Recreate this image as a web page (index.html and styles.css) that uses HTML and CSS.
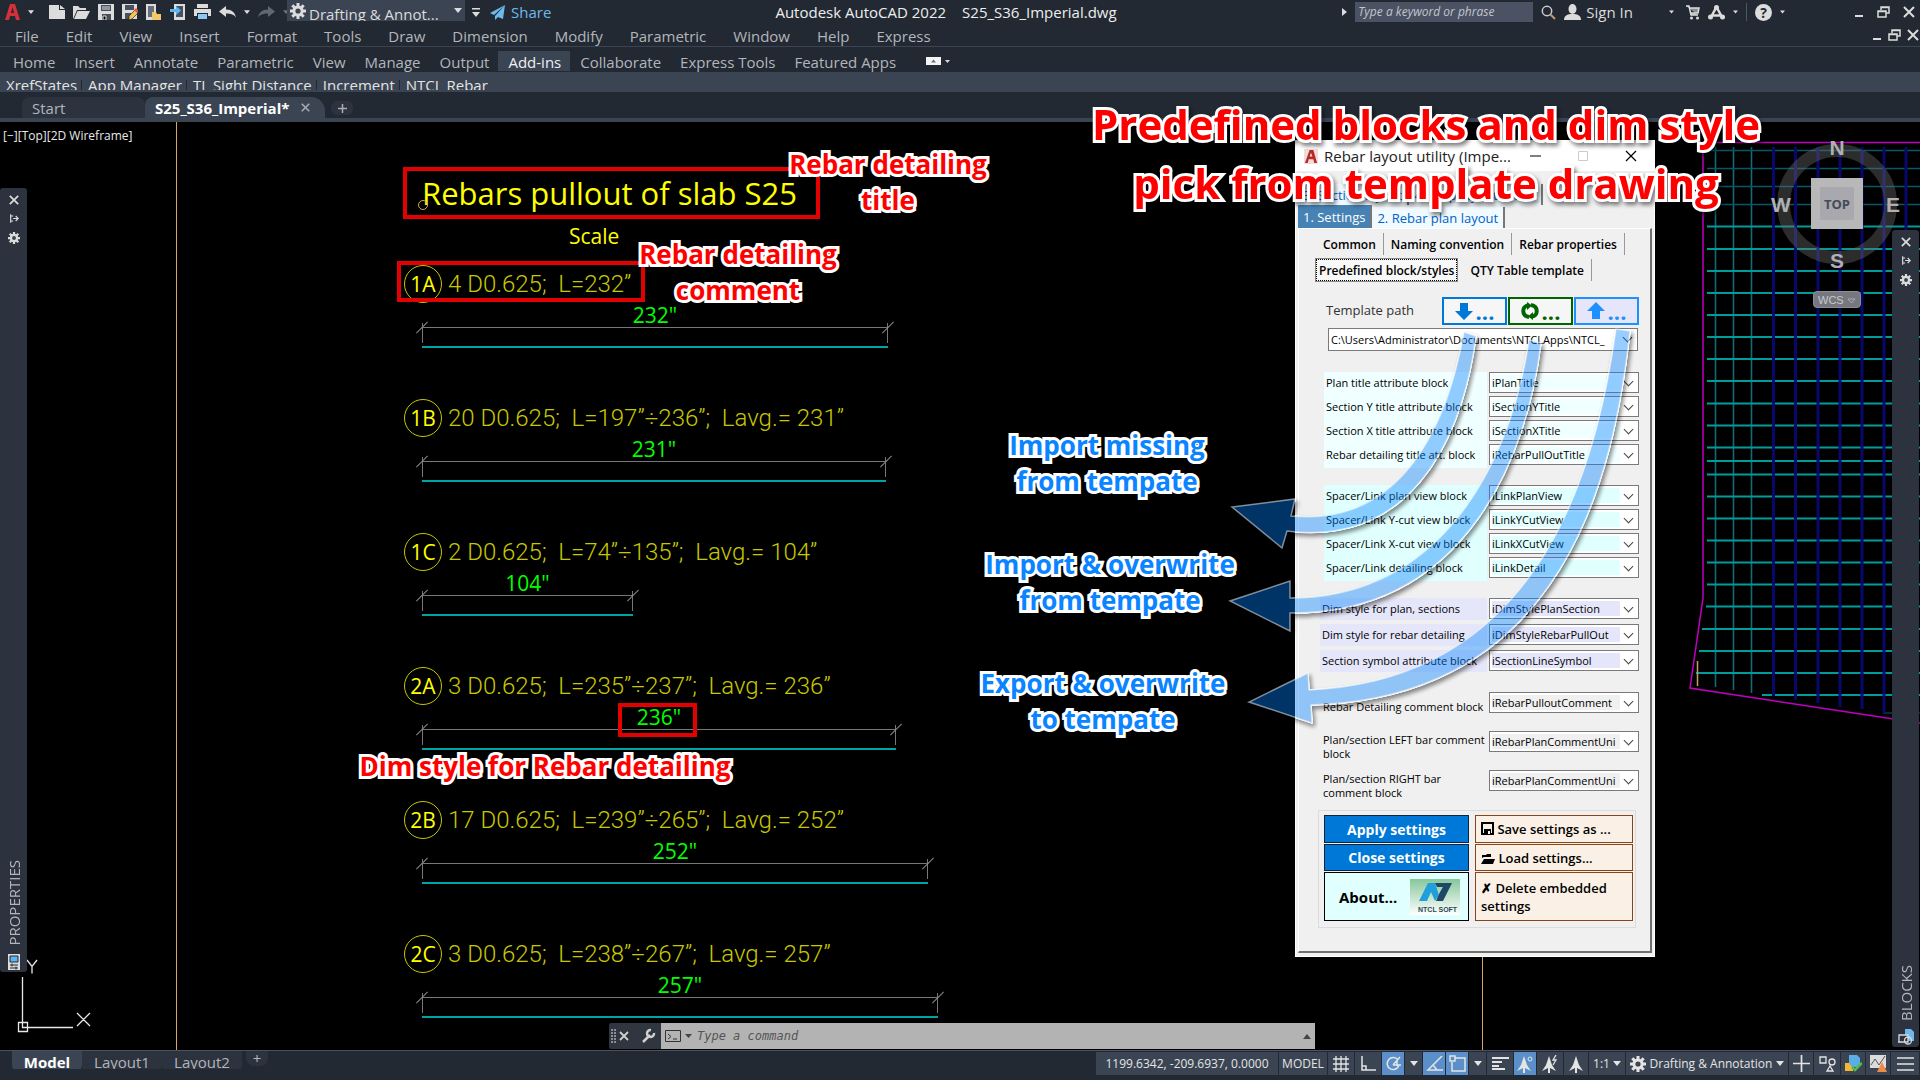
FILE: index.html
```html
<!DOCTYPE html>
<html lang="en">

<head>
    <meta charset="UTF-8" />
    <meta name="viewport" content="width=device-width, initial-scale=1.0" />
    <title>Autodesk AutoCAD 2022 - S25_S36_Imperial.dwg</title>
    <link rel="stylesheet" href="styles.css">
</head>

<body>
    <!-- shared icons -->
    <svg class="sprite" aria-hidden="true">
        <symbol id="i-down" viewBox="0 0 8 5"><path d="M0 0h8L4 5z" fill="currentColor" /></symbol>
        <symbol id="i-gear" viewBox="0 0 16 16">
            <g stroke="currentColor" stroke-width="3">
                <path d="M8 0v16M0 8h16M2.3 2.3l11.4 11.4M13.7 2.3L2.3 13.7" />
            </g>
            <circle cx="8" cy="8" r="5.6" fill="currentColor" />
            <circle class="hole" cx="8" cy="8" r="2.6" />
        </symbol>
        <symbol id="i-close" viewBox="0 0 12 12"><path d="M1 1l10 10M11 1L1 11" stroke="currentColor" stroke-width="2" /></symbol>
        <symbol id="i-restore" viewBox="0 0 13 12">
            <path d="M4 4V1h8v6H9M4 1.6h8M1 5h8v6H1zM1 5.6h8" fill="none" stroke="currentColor" stroke-width="1.5" />
        </symbol>
        <symbol id="i-min" viewBox="0 0 10 12"><path d="M1 10h8" stroke="currentColor" stroke-width="2" /></symbol>
        <symbol id="i-pin" viewBox="0 0 12 12">
            <path d="M2 1v10M2 3h3M2 9h3M5 6h6M8 3l3 3-3 3" fill="none" stroke="currentColor" stroke-width="1.4" />
        </symbol>
        <symbol id="i-person-a" viewBox="0 0 16 18"><path d="M8 1l3 9 4 6-6-3v5H7v-5l-6 3 4-6z" fill="currentColor" /></symbol>
    </svg>

    <header class="app-header">
        <div class="title-bar">
            <div class="quick">
                <svg class="logo" width="15" height="16" viewBox="0 0 15 16"><path d="M0 16L5 0h5l5 16h-4l-1-4H5l-1 4zM6 9h3L7.500 3z" fill="#d3303b" fill-rule="evenodd" /></svg>
                <svg class="arrow" width="6" height="4"><use href="#i-down" /></svg>
                <svg class="file-first" width="16" height="14" viewBox="0 0 16 14"><path d="M0 0h10v5h6v9H0zM11 0l5 4h-5z" fill="#dcdcdc" /></svg>
                <svg width="17" height="14" viewBox="0 0 17 14"><path d="M0 14V1h5l2 2h6v2H4L1 12M4.500 6H17l-4 8H1z" fill="#dcdcdc" /></svg>
                <svg width="16" height="16" viewBox="0 0 16 16"><path d="M0 0h16v16H0z" fill="#dcdcdc" /><path d="M3 1h10v6H3zM4 10h9v6H4z" fill="#47505c" /><path d="M4 3h8M4 5h8M5 12h3v4H5z" stroke="#dcdcdc" /></svg>
                <svg width="16" height="16" viewBox="0 0 16 16"><path d="M0 0h15v15H0z" fill="#dcdcdc" /><path d="M3 1h9v5H3zM3 9h6v6H3z" fill="#47505c" /><path d="M7 16v-4l6-6 3 3-6 6z" fill="#f2c14e" stroke="#222932" stroke-width=".7" /><path d="M12 6l2-2 3 3-2 2z" fill="#e4584c" /></svg>
                <svg width="16" height="16" viewBox="0 0 16 16"><path d="M0 0h10v16H0z" fill="#dcdcdc" /><path d="M2 2h6v11H2z" fill="#66707c" /><path d="M6 8h4l1 2h4v6H6z" fill="#f2c868" /></svg>
                <svg width="16" height="16" viewBox="0 0 16 16"><path d="M4 0h11v16H4z" fill="#dcdcdc" /><path d="M6 2h7v11H6z" fill="#47505c" /><path d="M0 5h6V2l5 4.500L6 11V8H0z" fill="#59b6f5" /></svg>
                <svg width="17" height="16" viewBox="0 0 17 16"><path d="M3 0h11v4H3zM0 5h17v7H0z" fill="#dcdcdc" /><path d="M3 9h11v7H3z" fill="#222932" /><path d="M4 10h9v5H4z" fill="#8ac9f5" /></svg>
                <svg width="17" height="12" viewBox="0 0 17 12"><path d="M7 0v3.500c6 0 9 3 10 8-2-3-5-4-10-4V11L0 5.500z" fill="#dcdcdc" /></svg>
                <svg class="arrow" width="6" height="4"><use href="#i-down" /></svg>
                <svg width="17" height="12" viewBox="0 0 17 12"><path d="M10 0v3.500C4 3.500 1 6.500 0 11.500c2-3 5-4 10-4V11l7-5.500z" fill="#5f6873" /></svg>
                <svg class="arrow dim-arrow" width="6" height="4"><use href="#i-down" /></svg>
            </div>
            <div class="workspace">
                <svg width="16" height="16"><use href="#i-gear" /></svg>
                <select aria-label="Workspace">
                    <option>Drafting &amp; Annot...</option>
                </select>
                <svg class="arrow" width="8" height="5"><use href="#i-down" /></svg>
            </div>
            <svg class="more" width="8" height="9" viewBox="0 0 8 9"><path d="M0 0h8v1.500H0zM0 4h8L4 9z" fill="#dcdcdc" /></svg>
            <button class="share"><svg width="15" height="15" viewBox="0 0 15 15"><path d="M15 0L0 8l4 2zM15 0L5 11v4l3-3 5 2z" fill="#6db9ee" /></svg>Share</button>
            <div class="app-title"><span>Autodesk AutoCAD 2022</span><span>S25_S36_Imperial.dwg</span></div>
            <div class="info">
                <svg width="5" height="8" viewBox="0 0 5 8"><path d="M0 0l5 4-5 4z" fill="#dcdcdc" /></svg>
                <input type="text" aria-label="Search" placeholder="Type a keyword or phrase">
                <svg width="15" height="15" viewBox="0 0 15 15" fill="none"><circle cx="6" cy="6" r="4.700" stroke="#c8ccd0" stroke-width="1.500" /><path d="M9.500 9.500l4.500 4.500" stroke="#c29a6b" stroke-width="2" /></svg>
                <button class="sign-in"><svg width="17" height="16" viewBox="0 0 17 16"><ellipse cx="8.500" cy="5" rx="4" ry="5" fill="#dcdcdc" /><path d="M0 16c0-5 4-6 8.500-6s8.500 1 8.500 6z" fill="#dcdcdc" /></svg>Sign In</button>
                <svg class="arrow" width="5" height="4"><use href="#i-down" /></svg>
                <svg class="cart" width="14" height="15" viewBox="0 0 14 15"><path d="M0 1h3l2 9h7M3 3h10l-1 5H4" fill="#8a9097" stroke="#dcdcdc" stroke-width="1.500" /><circle cx="5.500" cy="13" r="1.500" fill="#dcdcdc" /><circle cx="11.500" cy="13" r="1.500" fill="#dcdcdc" /></svg>
                <svg width="17" height="15" viewBox="0 0 17 15"><path d="M8.500 2L3 12M8.500 2L14 12M4 10.500h9" fill="none" stroke="#dcdcdc" stroke-width="2.500" /><circle cx="2.500" cy="12" r="2.500" fill="#dcdcdc" /><circle cx="14.500" cy="12" r="2.500" fill="#dcdcdc" /><circle cx="8.500" cy="2.500" r="2.500" fill="#dcdcdc" /></svg>
                <svg class="arrow" width="5" height="4"><use href="#i-down" /></svg>
                <span class="rule"></span>
                <button class="help" aria-label="Help">?</button>
                <svg class="arrow" width="5" height="4"><use href="#i-down" /></svg>
            </div>
            <div class="win-buttons">
                <svg width="10" height="12"><use href="#i-min" /></svg>
                <svg width="13" height="12"><use href="#i-restore" /></svg>
                <svg width="12" height="12"><use href="#i-close" /></svg>
            </div>
        </div>

        <nav class="menu-bar">
            <button>File</button><button>Edit</button><button>View</button><button>Insert</button><button>Format</button><button>Tools</button><button>Draw</button><button>Dimension</button><button>Modify</button><button>Parametric</button><button>Window</button><button>Help</button><button>Express</button>
            <div class="doc-buttons">
                <svg width="10" height="12"><use href="#i-min" /></svg>
                <svg width="13" height="12"><use href="#i-restore" /></svg>
                <svg width="12" height="12"><use href="#i-close" /></svg>
            </div>
        </nav>

        <nav class="ribbon-tabs">
            <button>Home</button><button>Insert</button><button>Annotate</button><button>Parametric</button><button>View</button><button>Manage</button><button>Output</button><button class="active">Add-ins</button><button>Collaborate</button><button>Express Tools</button><button>Featured Apps</button>
            <svg class="collapse" width="24" height="8" viewBox="0 0 24 8"><path d="M0 0h15v8H0z" fill="#f4f4f4" /><path d="M5 5.500h5L7.500 2.500z" fill="#6b7078" /><path d="M19 3h5l-2.500 3z" fill="#dcdcdc" /></svg>
        </nav>

        <div class="ribbon-panels">
            <span>XrefStates</span><span>App Manager</span><span>TL Sight Distance</span><span>Increment</span><span>NTCL Rebar</span>
        </div>

        <div class="file-tabs">
            <button class="file-tab">Start</button>
            <button class="file-tab active">S25_S36_Imperial*<svg width="9" height="9"><use href="#i-close" /></svg></button>
            <button class="add-tab" aria-label="New drawing"><svg width="9" height="9" viewBox="0 0 9 9"><path d="M4.500 0v9M0 4.500h9" stroke="#a9adb3" stroke-width="1.500" /></svg></button>
        </div>
    </header>

    <main class="canvas">
        <span class="view-label">[−][Top][2D Wireframe]</span>
        <i class="axis axis-left"></i>
        <i class="axis axis-right"></i>

        <!-- slab plan with the rebar mesh -->
        <svg class="plan" width="236" height="600" viewBox="1684 130 236 600" fill="none">
            <g stroke="#12697a" stroke-width="1.600">
                <path d="M1715.500 147v540M1733.500 147v543M1751.500 147v546" />
                <path d="M1707 150.500h213M1707 168.500h213M1707 186.500h213M1707 204.500h213" stroke="#07566a" />
                <path d="M1883 713h37" stroke="#063a4c" />
            </g>
            <path stroke="#009c9c" stroke-width="1.800" d="M1707 226.500h213M1707 249h213M1707 271h213M1707 293h213M1707 315h213M1707 337h213M1707 359h213M1707 381h213M1707 403.500h213M1707 425.500h213M1707 447.500h213M1707 461h213M1707 474.500h213M1707 496.500h213M1707 518.500h213M1707 540.500h213M1707 562.500h213M1707 584.500h213M1706 606.500h214M1702 629h218M1699 651h221M1696 673h224M1762 695h158" />
            <path stroke="#08086c" stroke-width="3" d="M1773.500 147v549M1795.500 147v553M1818 147v556M1840 147v560M1862 147v562M1884 147v566M1906 147v568" />
            <path stroke="#c000c0" stroke-width="1.500" d="M1920 142.500h-217V598L1690 688l230 35" />
            <path stroke="#c0a060" stroke-width="1.500" d="M1697.500 661v25" />
        </svg>

        <div class="viewcube">
            <div class="ring"></div>
            <b class="north">N</b><b class="south">S</b><b class="west">W</b><b class="east">E</b>
            <button class="face">TOP</button>
            <button class="wcs">WCS <svg width="9" height="6" viewBox="0 0 9 6"><path d="M1 1h7L4.500 5z" fill="none" stroke="#a8a8ae" /></svg></button>
        </div>

        <div class="frame frame-title"></div>
        <h1 class="drawing-title">Rebars pullout of slab S25</h1>
        <i class="grip"></i>
        <span class="scale">Scale</span>

        <div class="bars">
            <div class="bar">
                <div class="bar-head"><span class="mark">1A</span><span class="note">4 D0.625; &nbsp;L=232”</span></div>
                <div class="dim" style="width: 466px"><span>232"</span></div>
            </div>
            <div class="bar">
                <div class="bar-head"><span class="mark">1B</span><span class="note">20 D0.625; &nbsp;L=197”÷236”; &nbsp;Lavg.= 231”</span></div>
                <div class="dim" style="width: 464px"><span>231"</span></div>
            </div>
            <div class="bar">
                <div class="bar-head"><span class="mark">1C</span><span class="note">2 D0.625; &nbsp;L=74”÷135”; &nbsp;Lavg.= 104”</span></div>
                <div class="dim" style="width: 211px"><span>104"</span></div>
            </div>
            <div class="bar">
                <div class="bar-head"><span class="mark">2A</span><span class="note">3 D0.625; &nbsp;L=235”÷237”; &nbsp;Lavg.= 236”</span></div>
                <div class="dim" style="width: 474px"><span>236"</span></div>
            </div>
            <div class="bar">
                <div class="bar-head"><span class="mark">2B</span><span class="note">17 D0.625; &nbsp;L=239”÷265”; &nbsp;Lavg.= 252”</span></div>
                <div class="dim" style="width: 506px"><span>252"</span></div>
            </div>
            <div class="bar">
                <div class="bar-head"><span class="mark">2C</span><span class="note">3 D0.625; &nbsp;L=238”÷267”; &nbsp;Lavg.= 257”</span></div>
                <div class="dim" style="width: 516px"><span>257"</span></div>
            </div>
        </div>
        <div class="frame frame-comment"></div>
        <div class="frame frame-dim"></div>

        <svg class="ucs" width="80" height="80" viewBox="15 957 80 80" fill="none" stroke="#e8e8e8" stroke-width="1.300">
            <path d="M22.500 977v50.500H73M18.500 1022.500h9v9h-9zM27 960l5 6.500 5-6.500M32 966.500v7M77 1013l13 13M90 1013l-13 13" />
        </svg>

        <aside class="palette palette-left">
            <svg width="10" height="10"><use href="#i-close" /></svg>
            <svg width="10" height="11"><use href="#i-pin" /></svg>
            <svg width="12" height="12"><use href="#i-gear" /></svg>
            <span>PROPERTIES</span>
            <svg width="12" height="16" viewBox="0 0 12 16"><path d="M0 0h12v16H0z" fill="#dcdcdc" /><path d="M2 2h8v6H2z" fill="#59b6f5" stroke="#222932" /><path d="M2 11h8M2 14h8M4 9.500v3M8 12.500v3" stroke="#222932" /></svg>
        </aside>
        <aside class="palette palette-right">
            <svg width="10" height="10"><use href="#i-close" /></svg>
            <svg width="10" height="11"><use href="#i-pin" /></svg>
            <svg width="12" height="12"><use href="#i-gear" /></svg>
            <span>BLOCKS</span>
            <svg width="16" height="16" viewBox="0 0 16 16"><path d="M7 0h6l3 3v9H7z" fill="#6db9ee" /><path d="M1 6h9v7H1zM0 13h6" fill="#2c333f" stroke="#dcdcdc" stroke-width="1.300" /><circle cx="10" cy="11.500" r="3.500" stroke="#dcdcdc" stroke-width="1.300" fill="none" /></svg>
        </aside>

        <form class="dialog">
            <div class="dialog-title">
                <svg width="14" height="15" viewBox="0 0 15 16"><path d="M0 0h15v16H0z" fill="#f3dcd8" /><path d="M1 15L6 1h4l4 14h-3l-1-4H5l-1 4zM6 8h3L7.500 4z" fill="#b52a2a" fill-rule="evenodd" /></svg>
                <span>Rebar layout utility (Impe...</span>
                <svg width="108" height="12" viewBox="0 0 108 12" fill="none"><path d="M0 6h11" stroke="#000" /><path d="M48.500 1.500h9v9h-9z" stroke="#ccc" /><path d="M96 1l10 10M106 1L96 11" stroke="#000" stroke-width="1.200" /></svg>
            </div>
            <div class="tabs tabs-back">
                <button type="button">3. Section layout</button><button type="button">4. Help layout/Video</button>
            </div>
            <div class="tabs">
                <button type="button" class="active">1. Settings</button><button type="button">2. Rebar plan layout</button>
            </div>
            <div class="page">
                <div class="subtabs">
                    <button type="button">Common</button><button type="button">Naming convention</button><button type="button">Rebar properties</button>
                </div>
                <div class="subtabs">
                    <button type="button" class="active">Predefined block/styles</button><button type="button">QTY Table template</button>
                </div>

                <div class="template-row">
                    <label for="template">Template path</label>
                    <button type="button" class="import" aria-label="Import missing"><svg width="18" height="18" viewBox="0 0 18 18"><path d="M5 1h8v8h5l-9 9-9-9h5z" fill="currentColor" /></svg>...</button>
                    <button type="button" class="sync" aria-label="Import and overwrite"><svg width="18" height="18" viewBox="0 0 18 18" fill="none" stroke="currentColor" stroke-width="4"><path d="M8 15C0 14 1 4 7 3.500M10 3c8 1 7 11 1 11.500" /><path d="M6 0l5 3.500L6 8zM12 10l-5 4.500 5 3.500z" fill="currentColor" stroke="none" /></svg>...</button>
                    <button type="button" class="export" aria-label="Export and overwrite"><svg width="18" height="18" viewBox="0 0 18 18"><path d="M5 17h8V9h5L9 0 0 9h5z" fill="currentColor" /></svg>...</button>
                </div>
                <div class="combo path"><select id="template"><option>C:\Users\Administrator\Documents\NTCLApps\NTCL_</option></select></div>

                <div class="group group-title">
                    <label for="f1">Plan title attribute block</label>
                    <div class="combo"><select id="f1"><option>iPlanTitle</option></select></div>
                    <label for="f2">Section Y title attribute block</label>
                    <div class="combo"><select id="f2"><option>iSectionYTitle</option></select></div>
                    <label for="f3">Section X title attribute block</label>
                    <div class="combo"><select id="f3"><option>iSectionXTitle</option></select></div>
                    <label for="f4">Rebar detailing title att. block</label>
                    <div class="combo"><select id="f4"><option>iRebarPullOutTitle</option></select></div>
                </div>
                <div class="group group-link">
                    <label for="f5">Spacer/Link plan view block</label>
                    <div class="combo"><select id="f5"><option>iLinkPlanView</option></select></div>
                    <label for="f6">Spacer/Link Y-cut view block</label>
                    <div class="combo"><select id="f6"><option>iLinkYCutView</option></select></div>
                    <label for="f7">Spacer/Link X-cut view block</label>
                    <div class="combo"><select id="f7"><option>iLinkXCutView</option></select></div>
                    <label for="f8">Spacer/Link detailing block</label>
                    <div class="combo"><select id="f8"><option>iLinkDetail</option></select></div>
                </div>
                <div class="group group-style">
                    <label for="f9">Dim style for plan, sections</label>
                    <div class="combo"><select id="f9"><option>iDimStylePlanSection</option></select></div>
                    <label for="f10">Dim style for rebar detailing</label>
                    <div class="combo"><select id="f10"><option>iDimStyleRebarPullOut</option></select></div>
                    <label for="f11">Section symbol attribute block</label>
                    <div class="combo"><select id="f11"><option>iSectionLineSymbol</option></select></div>
                </div>
                <div class="group group-comment">
                    <label for="f12" class="single">Rebar Detailing comment block</label>
                    <div class="combo"><select id="f12"><option>iRebarPulloutComment</option></select></div>
                    <label for="f13">Plan/section LEFT bar comment<br>block</label>
                    <div class="combo"><select id="f13"><option>iRebarPlanCommentUni</option></select></div>
                    <label for="f14">Plan/section RIGHT bar<br>comment block</label>
                    <div class="combo"><select id="f14"><option>iRebarPlanCommentUni</option></select></div>
                </div>

                <div class="actions">
                    <button type="button" class="primary">Apply settings</button>
                    <button type="button" class="plain"><svg width="13" height="13" viewBox="0 0 13 13"><path d="M1 1h11v11H1z" fill="none" stroke="#000" stroke-width="2" /><path d="M3 7h7v5H3z" fill="#000" /><path d="M7 9h2v3H7z" fill="#faf0e6" /></svg> Save settings as ...</button>
                    <button type="button" class="primary">Close settings</button>
                    <button type="button" class="plain"><svg width="14" height="10" viewBox="0 0 14 10"><path d="M1 4V1h4l1-1h4v3H3zM3 5h11l-2 5H0z" fill="#000" /></svg> Load settings...</button>
                    <button type="button" class="about">About...
                        <svg class="soft" width="50" height="36" viewBox="0 0 50 36">
                            <defs><linearGradient id="soft-bg" x2="0" y2="1"><stop stop-color="#86c79c" /><stop offset="1" stop-color="#fff" /></linearGradient></defs>
                            <path d="M0 0h50v36H0z" fill="url(#soft-bg)" />
                            <path d="M9 22L18 4h7l4 12-4 6-4-9-4 9z" fill="#1f9fdc" />
                            <path d="M25 4h17L33 22h-7l4-9 3-5h-6z" fill="#1d4866" />
                            <text x="8" y="33">NTCL SOFT</text>
                        </svg>
                    </button>
                    <button type="button" class="plain">✗ Delete embedded settings</button>
                </div>
            </div>
        </form>

        <!-- callout arrows from the template buttons, shadow only outside the fill -->
        <svg class="arrows" width="430" height="420" viewBox="1220 322 430 420">
            <filter id="outer-shadow" color-interpolation-filters="sRGB">
                <feComponentTransfer in="SourceAlpha" result="solid"><feFuncA type="linear" slope="4" /></feComponentTransfer>
                <feOffset in="solid" dx="2" dy="3" />
                <feGaussianBlur stdDeviation="2" />
                <feComposite in2="solid" operator="out" />
                <feComponentTransfer result="shadow"><feFuncA type="linear" slope=".45" /></feComponentTransfer>
                <feMerge><feMergeNode in="shadow" /><feMergeNode in="SourceGraphic" /></feMerge>
            </filter>
            <g filter="url(#outer-shadow)">
                <path d="M1464 332C1452 400 1415 528 1291 516L1295 499 1232 507 1282 548 1287 531C1425 548 1466 415 1476 336z" />
                <path d="M1529 340C1515 440 1455 598 1290 598V581L1230 601 1290 631V613C1470 614 1528 450 1541 343z" />
                <path d="M1616 329C1598 460 1545 680 1309 690L1308 673 1249 702 1312 723 1311 705C1565 698 1614 475 1630 331z" />
            </g>
        </svg>

        <p class="callout headline">Predefined blocks and dim style<br>pick from template drawing</p>
        <p class="callout red c-title">Rebar detailing<br>title</p>
        <p class="callout red c-comment">Rebar detailing<br>comment</p>
        <p class="callout red c-dim">Dim style for Rebar detailing</p>
        <p class="callout blue c-missing">Import missing<br>from tempate</p>
        <p class="callout blue c-import">Import &amp; overwrite<br>from tempate</p>
        <p class="callout blue c-export">Export &amp; overwrite<br>to tempate</p>

        <div class="command">
            <svg width="52" height="20" viewBox="0 0 52 20" fill="none" stroke="#d0d0d0"><path d="M3 3v14M6 3v14" stroke-dasharray="2 1" stroke-width="2" stroke="#8a9097" /><path d="M11 6l8 8M19 6l-8 8" stroke-width="1.800" /><path d="M34 16l7-7" stroke-width="2.500" /><path d="M45 7a3.500 3.500 0 1 1-3-3" stroke-width="2.500" /></svg>
            <div class="command-line">
                <svg width="28" height="12" viewBox="0 0 28 12"><path d="M.5.5h15v11H.5zM3 4l3 2.500L3 9M8 9h4" fill="none" stroke="#333" /><path d="M20 4h7l-3.500 4z" fill="#444" /></svg>
                <input type="text" aria-label="Command" placeholder="Type a command">
                <svg width="8" height="5" viewBox="0 0 8 5"><path d="M0 5h8L4 0z" fill="#444" /></svg>
            </div>
        </div>
    </main>

    <footer class="status-bar">
        <div class="layout-tabs">
            <button class="active">Model</button><button>Layout1</button><button>Layout2</button><button class="plus" aria-label="New layout">+</button>
        </div>
        <div class="status-items">
            <span class="coords">1199.6342, -209.6937, 0.0000</span>
            <button class="model">MODEL</button>
            <button class="w26"><svg width="16" height="16" viewBox="0 0 16 16"><path d="M3 0v16M8 0v16M13 0v16M0 3h16M0 8h16M0 13h16" stroke="currentColor" stroke-width="1.300" /></svg></button>
            <button class="w26"><svg width="16" height="16" viewBox="0 0 16 16"><path d="M2 0v14h14M2 10h4v4" fill="none" stroke="currentColor" stroke-width="1.500" /></svg></button>
            <button class="on"><svg width="17" height="17" viewBox="0 0 17 17" fill="none" stroke="currentColor" stroke-width="1.500"><path d="M13 5a6 6 0 1 0 1 5M8 10h8M8 10l7-8M12 5v6" /></svg></button>
            <button class="w18"><svg width="8" height="5"><use href="#i-down" /></svg></button>
            <button class="on"><svg width="17" height="15" viewBox="0 0 17 15" fill="none" stroke="currentColor" stroke-width="1.500"><path d="M16 0L2 14h15M7 9l4 5" /></svg></button>
            <button class="on"><svg width="17" height="17" viewBox="0 0 17 17" fill="none" stroke="currentColor" stroke-width="1.500"><path d="M6 3h10v13H3V7M1 1h5v5H1z" /></svg></button>
            <button class="w18"><svg width="8" height="5"><use href="#i-down" /></svg></button>
            <button class="w26"><svg width="17" height="13" viewBox="0 0 17 13"><path d="M0 1h17M0 5h10M0 9h7M0 12h13" stroke="currentColor" stroke-width="2" /></svg></button>
            <button class="on"><svg width="16" height="18" viewBox="0 0 16 18"><path d="M7 1l3 9 4 6-6-3v5H6v-5l-6 3 4-6z" fill="currentColor" /><circle cx="13" cy="4" r="2" fill="none" stroke="currentColor" /></svg></button>
            <button class="w26"><svg width="16" height="18" viewBox="0 0 16 18"><path d="M7 1l3 9 4 6-6-3v5H6v-5l-6 3 4-6z" fill="currentColor" /><path d="M14 0l-3 5h3l-3 5" fill="none" stroke="currentColor" stroke-width="1.300" /></svg></button>
            <button class="w24"><svg width="16" height="18"><use href="#i-person-a" /></svg></button>
            <button class="scale-list">1:1<svg width="8" height="5"><use href="#i-down" /></svg></button>
            <button class="ws-list"><svg width="16" height="16"><use href="#i-gear" /></svg>Drafting &amp; Annotation<svg width="8" height="5"><use href="#i-down" /></svg></button>
            <button class="w24"><svg width="17" height="17" viewBox="0 0 17 17"><path d="M8.500 0v17M0 8.500h17" stroke="currentColor" stroke-width="1.700" /></svg></button>
            <button class="w26"><svg width="17" height="16" viewBox="0 0 17 16" fill="none" stroke="currentColor" stroke-width="1.300"><path d="M1 1h6v6H1zM8 15l3-5 3 5z" /><circle cx="13" cy="6" r="3" /></svg></button>
            <button class="w24"><svg width="17" height="17" viewBox="0 0 17 17"><path d="M0 8h8v8H0z" fill="#f2b632" /><path d="M4 0h8l3 3v9H7L4 8z" fill="#5aaee8" /><path d="M7 12l3 3 7-7" fill="none" stroke="#54b948" stroke-width="2.500" /></svg></button>
            <button class="w24"><svg width="17" height="17" viewBox="0 0 17 17"><path d="M0 0h16v13H0z" fill="#dcdcdc" /><path d="M1 10l4-6 4 6 6-9" fill="none" stroke="#555" /><path d="M12 7l5 10H7z" fill="#f08a4b" /></svg></button>
            <button class="w30"><svg width="17" height="14" viewBox="0 0 17 14"><path d="M0 1h17M0 7h17M0 13h17" stroke="currentColor" stroke-width="1.700" /></svg></button>
        </div>
    </footer>
</body>

</html>
```
FILE: styles.css
```css
* {
    box-sizing: border-box;
}

body {
    margin: 0;
    min-height: 100vh;
    display: flex;
    flex-direction: column;
    background: #000;
    font-family: "Open Sans", "Noto Sans", sans-serif;
    font-size: 15px;
    color: #dcdcdc;
    overflow: hidden;
}

button,
input,
select {
    font: inherit;
    color: inherit;
    background: none;
    border: 0;
    padding: 0;
    margin: 0;
    border-radius: 0;
    appearance: none;
    white-space: nowrap;
}

svg {
    flex: none;
}

.sprite {
    position: absolute;
    width: 0;
    height: 0;
}

.hole {
    fill: #3b4453;
}

/* header */

.app-header {
    background: #222932;
    border-bottom: 4px solid #3b4453;
}

.title-bar {
    height: 24px;
    padding: 0 5px;
    display: flex;
    align-items: center;
    position: relative;
    line-height: 20px;
}

.quick {
    width: 282px;
    display: flex;
    align-items: center;
    gap: 8px;
}

.file-first {
    margin-left: 7px;
}

.dim-arrow {
    color: #6b737e;
}

.workspace {
    width: 178px;
    height: 21px;
    padding: 0 3px;
    margin-bottom: 3px;
    background: #3b4453;
    display: flex;
    align-items: center;
    overflow: hidden;
}

.workspace select {
    flex: 1;
    height: 22px;
    padding: 2px 3px 0;
    margin-bottom: -5px;
}

.more {
    margin-left: 7px;
}

.share {
    margin-left: 10px;
    display: flex;
    align-items: center;
    gap: 6px;
    color: #6db9ee;
}

.app-title {
    position: absolute;
    left: 50%;
    top: 2px;
    transform: translateX(-50%);
    margin-left: -14px;
    display: flex;
    gap: 16px;
    color: #eee;
}

.info {
    margin-left: auto;
    display: flex;
    align-items: center;
    gap: 8px;
}

.info input {
    width: 178px;
    height: 20px;
    padding: 0 3px;
    background: #4a5263;
    font-size: 12px;
    font-style: italic;
}

.info input::placeholder {
    color: #c2c6cc;
}

.sign-in {
    display: flex;
    align-items: center;
    gap: 5px;
    margin-right: 28px;
}

.cart {
    margin-left: 4px;
}

.rule {
    width: 1px;
    height: 18px;
    background: #4e5664;
}

.help {
    width: 17px;
    height: 17px;
    border-radius: 50%;
    background: #dcdcdc;
    color: #222932;
    font-size: 14px;
    font-weight: 700;
    line-height: 17px;
}

.win-buttons {
    display: flex;
    gap: 13px;
    margin-left: 69px;
}

.menu-bar {
    height: 23px;
    padding: 0 1px;
    display: flex;
    align-items: center;
    border-bottom: 1px solid #3b4453;
    color: #b2b6bc;
}

.menu-bar button {
    padding: 1px 13px 0 14px;
    line-height: 20px;
}

.doc-buttons {
    margin-left: auto;
    display: flex;
    gap: 6px;
    color: #dcdcdc;
}

.ribbon-tabs {
    height: 25px;
    padding: 4px 3px 1px;
    display: flex;
    color: #b2b6bc;
}

.ribbon-tabs button {
    padding: 1px 9px 0 10px;
    line-height: 20px;
}

.ribbon-tabs .active {
    background: #3b4453;
    color: #f0f0f0;
}

.collapse {
    align-self: center;
    margin-left: 21px;
}

.ribbon-panels {
    height: 20px;
    background: #3b4453;
    display: flex;
    color: #e4e4e4;
}

.ribbon-panels span {
    height: 10px;
    margin-top: 8px;
    padding: 0 4px 0 6px;
    line-height: 10px;
    overflow: hidden;
    border-right: 1px solid #222932;
}

.ribbon-panels span:last-child {
    border: 0;
}

.file-tabs {
    height: 26px;
    padding: 5px 0 0 22px;
    display: flex;
}

.file-tab {
    width: 123px;
    padding-left: 10px;
    background: #2c333f;
    border-radius: 8px 8px 0 0;
    text-align: left;
    line-height: 20px;
    color: #b2b6bc;
}

.file-tab.active {
    width: 180px;
    background: #3b4453;
    color: #fff;
    font-weight: 700;
    border-radius: 8px 14px 0 0;
}

.file-tab svg {
    margin-left: 12px;
    margin-bottom: 2px;
    color: #a9adb3;
}

.add-tab {
    width: 22px;
    height: 14px;
    margin: 4px 6px;
    background: #2c333f;
    border-radius: 6px;
    display: flex;
    align-items: center;
    justify-content: center;
}

/* drawing area */

.canvas {
    flex: 1;
    position: relative;
    background: #000;
}

.view-label {
    position: absolute;
    left: 3px;
    top: 5px;
    font-size: 12px;
    line-height: 18px;
    color: #e8e8e8;
}

.axis {
    position: absolute;
    width: 1px;
    bottom: 0;
    background: #d9a763;
}

.axis-left {
    left: 176px;
    top: 0;
}

.axis-right {
    left: 1482px;
    top: 830px;
}

.plan {
    position: absolute;
    right: 0;
    top: 8px;
}

.viewcube {
    position: absolute;
    right: 22px;
    top: 20px;
    width: 122px;
    height: 170px;
    font-family: "Liberation Sans", Arial, sans-serif;
    color: #b0b0b0;
}

.viewcube b {
    position: absolute;
    width: 20px;
    text-align: center;
    font-size: 21px;
    line-height: 20px;
}

.ring {
    position: absolute;
    left: 1px;
    top: 2px;
    width: 120px;
    height: 120px;
    border: 13px solid rgba(110, 110, 110, 0.4);
    border-radius: 50%;
}

.north {
    left: 51px;
    top: -4px;
}

.south {
    left: 51px;
    top: 109px;
}

.west {
    left: -5px;
    top: 53px;
}

.east {
    left: 107px;
    top: 53px;
}

.face {
    position: absolute;
    left: 35px;
    top: 36px;
    width: 52px;
    height: 51px;
    background: #a8a8ae;
    border: 9px solid #b8b8b8;
    color: #454b55;
    font: 700 13px "Open Sans", sans-serif;
    display: flex;
    align-items: center;
    justify-content: center;
}

.wcs {
    position: absolute;
    left: 37px;
    top: 149px;
    width: 48px;
    height: 17px;
    padding-left: 4px;
    border-radius: 4px;
    background: #77777f;
    border: 1px solid #8c8c94;
    color: #c8c8cc;
    font-size: 11px;
    line-height: 14px;
    text-align: left;
}

.frame {
    position: absolute;
    border: 4px solid #e30000;
}

.frame-title {
    left: 403px;
    top: 45px;
    width: 417px;
    height: 52px;
}

.frame-comment {
    left: 397px;
    top: 139px;
    width: 248px;
    height: 41px;
}

.frame-dim {
    left: 618px;
    top: 581px;
    width: 79px;
    height: 34px;
}

.drawing-title {
    position: absolute;
    left: 422px;
    top: 50px;
    margin: 0;
    font-size: 31px;
    font-weight: 400;
    line-height: 42px;
    color: #ff0;
}

.grip {
    position: absolute;
    left: 418px;
    top: 78px;
    width: 10px;
    height: 10px;
    border: 1px solid #d9a763;
    border-radius: 50%;
}

.scale {
    position: absolute;
    left: 569px;
    top: 98px;
    font-size: 21px;
    line-height: 32px;
    color: #ff0;
}

.bars {
    position: absolute;
    left: 404px;
    top: 143px;
}

.bar {
    height: 134px;
}

.bar-head {
    height: 38px;
    display: flex;
    align-items: center;
    gap: 6px;
    color: #c8c800;
}

.mark {
    width: 38px;
    height: 38px;
    border: 1px solid #c8c800;
    border-radius: 50%;
    text-align: center;
    font-size: 21px;
    line-height: 36px;
    color: #ff0;
}

.note {
    font-family: Roboto, "Open Sans", sans-serif;
    font-weight: 300;
    font-size: 24px;
    white-space: nowrap;
}

.dim {
    position: relative;
    height: 45px;
    margin-left: 18px;
    border-bottom: 2px solid #00a4a4;
    text-align: center;
    font-size: 21px;
    line-height: 24px;
    color: #0f0;
    background:
        linear-gradient(#777, #777) 0 24px / 100% 1px no-repeat,
        linear-gradient(#777, #777) 0 20px / 1px 20px no-repeat,
        linear-gradient(#777, #777) 100% 20px / 1px 20px no-repeat;
}

.dim::before,
.dim::after {
    content: "";
    position: absolute;
    top: 24px;
    width: 16px;
    height: 1px;
    background: #8a8a8a;
    transform: rotate(-45deg);
}

.dim::before {
    left: -8px;
}

.dim::after {
    right: -8px;
}

.ucs {
    position: absolute;
    left: 15px;
    top: 835px;
}

.palette {
    position: absolute;
    width: 27px;
    padding: 7px 0 2px;
    background: #2c333f;
    border-radius: 3px;
    display: flex;
    flex-direction: column;
    align-items: center;
    gap: 8px;
}

.palette-left {
    left: 0;
    top: 66px;
    bottom: 78px;
}

.palette-right {
    right: 1px;
    top: 108px;
    bottom: 3px;
}

.palette span {
    margin-top: auto;
    writing-mode: vertical-rl;
    transform: rotate(180deg);
    font-size: 15px;
    line-height: 20px;
    color: #b2b6bc;
}

/* settings dialog */

.dialog {
    position: absolute;
    left: 1295px;
    top: 18px;
    width: 360px;
    padding: 0 2px 3px;
    background: #f0f0f0;
    border: 1px solid #fff;
    color: #000;
    font-size: 11px;
}

.dialog-title {
    height: 30px;
    margin: 0 -2px 13px;
    padding: 0 16px 0 8px;
    background: #fff;
    display: flex;
    align-items: center;
    font-size: 15px;
}

.dialog-title span {
    flex: 1;
    padding-left: 6px;
    color: #222;
    white-space: nowrap;
}

.tabs {
    height: 23px;
    display: flex;
    align-items: flex-end;
    font-size: 13px;
    color: #0062c8;
}

.tabs button {
    height: 21px;
    padding: 0 5px;
    background: #f0faff;
    border-right: 2px solid #777;
}

.tabs-back {
    height: 21px;
}

.tabs .active {
    height: 23px;
    background: #4682b4;
    color: #fff;
}

.page {
    padding: 4px 11px 23px 19px;
    border: 1px solid #fff;
    border-right: 2px solid #707070;
    border-bottom: 2px solid #707070;
}

.subtabs {
    display: flex;
    margin: 0 0 4px -2px;
    font-size: 12px;
    font-weight: 600;
}

.subtabs button {
    height: 22px;
    padding: 0 7px;
    border-right: 1px solid #999;
}

.subtabs .active {
    padding: 0 2px;
    margin-right: 6px;
    border: 1px dotted #000;
    outline: 1px solid #888;
    background: #f8f8f8;
}

.template-row {
    height: 28px;
    margin: 16px 0 3px;
    padding-left: 8px;
    display: flex;
    gap: 1px;
    font-size: 13px;
}

.template-row label {
    flex: 1;
    line-height: 26px;
    color: #333;
}

.template-row button {
    width: 65px;
    border: 2px solid #0078d7;
    background: #f6f6f6;
    color: #0078d7;
    font-size: 22px;
    font-weight: 700;
    line-height: 22px;
    display: flex;
    align-items: center;
    justify-content: center;
    gap: 3px;
}

.template-row .sync {
    border-color: #006400;
    color: #006400;
}

.template-row .export {
    border-color: #1e90ff;
    background: #e6e6fa;
    color: #1e90ff;
}

.combo {
    position: relative;
    height: 21px;
    border: 1px solid #7a7a7a;
    background: #fff;
}

.combo::after {
    content: "";
    position: absolute;
    right: 6px;
    top: 5px;
    width: 6px;
    height: 6px;
    border: solid #444;
    border-width: 0 1px 1px 0;
    transform: rotate(45deg);
}

.combo select {
    width: 128px;
    height: 15px;
    margin: 2px;
    padding-left: 0;
    display: block;
    line-height: 15px;
}

.combo.path {
    height: 23px;
    margin: 0 1px 21px 10px;
}

.path select {
    width: 288px;
    height: 17px;
}

.group {
    display: grid;
    grid-template-columns: 1fr 150px;
    grid-auto-rows: 24px;
    column-gap: 2px;
    margin-bottom: 17px;
    padding-left: 6px;
}

.group label {
    padding-left: 2px;
    line-height: 22px;
    white-space: nowrap;
}

.group-title label,
.group-title select {
    background: #f0ffff;
}

.group-link label,
.group-link select {
    background: #e0ffff;
}

.group-style {
    grid-auto-rows: 26px;
    margin-bottom: 16px;
    padding-left: 2px;
}

.group-style label,
.group-style select {
    background: #e6e6fa;
}

.group-style label {
    height: 22px;
}

.group-comment {
    grid-auto-rows: 39px;
    margin-bottom: 1px;
    padding-left: 3px;
}

.group-comment label {
    padding-top: 2px;
    line-height: 14px;
}

.group-comment .single {
    padding-top: 8px;
}

.group-comment select {
    background: #f0f0f0;
}

.actions {
    margin-right: 3px;
    padding: 4px 2px 6px 5px;
    border: 1px solid #dcdcdc;
    display: grid;
    grid-template-columns: 145px 1fr;
    grid-template-rows: 28px 27px 49px;
    gap: 1px 6px;
    font-size: 13px;
    font-weight: 600;
}

.primary {
    background: #0078d7;
    border: 1px solid #10243c;
    color: #fff;
    font-size: 14px;
    font-weight: 700;
}

.plain {
    padding: 0 5px;
    background: #faf0e6;
    border: 1px solid #8b4513;
    text-align: left;
    line-height: 18px;
    white-space: normal;
}

.plain svg {
    vertical-align: -1px;
}

.about {
    padding: 0 8px 0 14px;
    background: #e0ffff;
    border: 1px solid #000;
    display: flex;
    align-items: center;
    justify-content: space-between;
    font-size: 15px;
    font-weight: 700;
}

.soft text {
    font: 700 7px "Liberation Sans", sans-serif;
    fill: #2d4a55;
}

/* callouts */

.arrows {
    position: absolute;
    left: 1220px;
    top: 200px;
    pointer-events: none;
}

.arrows path {
    fill: rgba(0, 128, 255, 0.4);
    stroke: rgba(255, 255, 255, 0.5);
    stroke-width: 1.5;
}

.callout {
    position: absolute;
    margin: 0;
    text-align: center;
    white-space: nowrap;
    font-size: 26px;
    font-weight: 700;
    line-height: 36px;
    -webkit-text-stroke: 6px #fff;
    paint-order: stroke fill;
    stroke-linejoin: round;
    transform: translateX(-50%);
}

.headline {
    left: 1426px;
    top: -28px;
    font-size: 42px;
    line-height: 59px;
    color: #f00;
    filter: drop-shadow(2px 3px 2px rgba(0, 0, 0, 0.5));
}

.red {
    color: #f00;
}

.blue {
    color: #0a84ff;
}

.c-title {
    left: 888px;
    top: 24px;
}

.c-comment {
    left: 738px;
    top: 114px;
}

.c-dim {
    left: 545px;
    top: 626px;
}

.c-missing {
    left: 1107px;
    top: 305px;
}

.c-import {
    left: 1110px;
    top: 424px;
}

.c-export {
    left: 1103px;
    top: 543px;
}

.command {
    position: absolute;
    left: 609px;
    bottom: 1px;
    width: 706px;
    height: 26px;
    display: flex;
    align-items: center;
    background: #30363f;
    border-radius: 2px;
}

.command-line {
    flex: 1;
    height: 26px;
    padding: 0 4px;
    display: flex;
    align-items: center;
    gap: 4px;
    background: #b3b3b3;
}

.command-line input {
    flex: 1;
    font: italic 12px "DejaVu Sans Mono", "Liberation Mono", monospace;
}

.command-line input::placeholder {
    color: #555;
}

/* status bar */

.status-bar {
    height: 30px;
    border-top: 1px solid #4a5160;
    background: #222932;
    display: flex;
    justify-content: space-between;
}

.layout-tabs {
    height: 18px;
    padding-left: 12px;
    display: flex;
    overflow: hidden;
}

.layout-tabs button {
    height: 22px;
    width: 80px;
    background: #2c333f;
    border-radius: 0 0 8px 8px;
    line-height: 22px;
    color: #b2b6bc;
}

.layout-tabs .active {
    width: 70px;
    background: #3b4453;
    color: #fff;
    font-weight: 700;
}

.layout-tabs .plus {
    width: 22px;
    height: 15px;
    margin-left: 4px;
    line-height: 15px;
}

.status-items {
    display: flex;
    gap: 1px;
    padding: 1px 1px 5px;
    font-size: 12px;
    color: #e4e4e4;
}

.status-items > * {
    height: 23px;
    background: #3b4453;
    display: flex;
    align-items: center;
    justify-content: center;
    line-height: 23px;
    width: 22px;
}

.status-items .coords {
    width: 182px;
}

.status-items .model {
    width: 48px;
}

.status-items .w18 {
    width: 17px;
}

.status-items .w24 {
    width: 24px;
}

.status-items .w26 {
    width: 26px;
}

.status-items .w30 {
    width: 28px;
}

.status-items .on {
    background: #5b8fc9;
}

.status-items .scale-list {
    width: 36px;
    gap: 3px;
}

.status-items .ws-list {
    width: 162px;
    gap: 4px;
}
```
